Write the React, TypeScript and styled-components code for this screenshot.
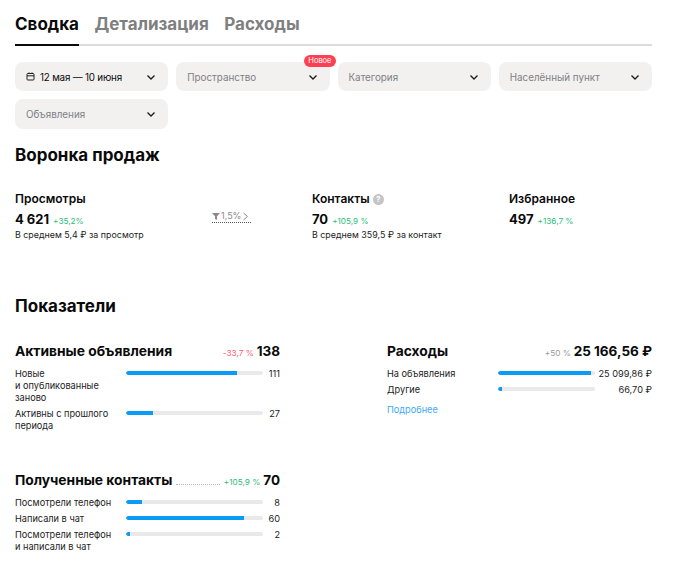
import React from 'react';
import styled, { createGlobalStyle } from 'styled-components';

const GlobalStyle = createGlobalStyle`
  html, body { margin: 0; padding: 0; background: #fff; }
  body { font-family: Inter, "Noto Sans", sans-serif; color: #0a0a0a; }
`;

const Page = styled.div`
  width: 637px;
  padding: 10px 30px 0 15px;
`;

const Tabs = styled.div`
  display: flex;
  gap: 15.5px;
  border-bottom: 2px solid #dcdcdc;
  height: 34px;
`;

const Tab = styled.div<{ $active?: boolean }>`
  font-size: 17px;
  line-height: 28px;
  height: 36px;
  box-sizing: border-box;
  font-weight: 700;
  color: ${p => (p.$active ? '#0a0a0a' : '#7f7f7f')};
  border-bottom: 2px solid ${p => (p.$active ? '#0a0a0a' : 'transparent')};
`;

const Filters = styled.div`
  display: grid;
  grid-template-columns: repeat(4, 1fr);
  gap: 8px;
  margin-top: 16px;
`;

const Filter = styled.div`
  position: relative;
  display: flex;
  align-items: center;
  height: 29px;
  padding: 0 11px 0 11px;
  background: #f2f1f0;
  border-radius: 8px;
  font-size: 9.85px;
  color: #7e8084;

  &:nth-child(5) { height: 30px; }
`;

const FilterValue = styled.span`
  display: flex;
  align-items: center;
  gap: 5px;
  color: #0a0a0a;
  letter-spacing: -0.2px;
`;

const Chevron = styled.svg`
  margin-left: auto;
  width: 12px;
  height: 12px;
  fill: none;
  stroke: #1a1a1a;
  stroke-width: 1.3;
`;

const NewBadge = styled.span`
  position: absolute;
  top: -7px;
  right: -6px;
  height: 12px;
  padding: 0 4px;
  border-radius: 6px;
  background: #ff4053;
  color: #fff;
  font-size: 7.5px;
  line-height: 12px;
`;

const SectionTitle = styled.h2`
  margin: 0;
  font-size: 17px;
  line-height: 22px;
  font-weight: 700;
`;

const FunnelTitle = styled(SectionTitle)`
  margin-top: 15px;
`;

const Funnel = styled.div`
  display: grid;
  grid-template-columns: 297px 197px 1fr;
  margin-top: 25px;
  height: 104px;
`;

const Metric = styled.div`
  position: relative;
`;

const MetricName = styled.div`
  display: flex;
  align-items: center;
  gap: 3px;
  font-size: 12px;
  line-height: 16px;
  font-weight: 600;
`;

const MetricLine = styled.div`
  display: flex;
  align-items: baseline;
  gap: 4px;
  margin-top: 3px;
  line-height: 18px;
`;

const MetricValue = styled.span`
  font-size: 13px;
  font-weight: 700;
`;

const Delta = styled.span<{ $tone: 'up' | 'down' | 'flat' }>`
  font-size: 8.2px;
  color: ${p => (p.$tone === 'up' ? '#2dbd7a' : p.$tone === 'down' ? '#ff5a6b' : '#9a9a9a')};
`;

const MetricNote = styled.div`
  font-size: 8.9px;
  line-height: 13px;
  margin-top: -2px;
  color: #1c1c1c;
`;

const Conversion = styled.div`
  position: absolute;
  top: 19px;
  left: 197px;
  width: 39px;
  display: flex;
  align-items: center;
  gap: 1px;
  font-size: 9px;
  line-height: 12px;
  color: #8a8a8a;
  border-bottom: 1px dotted #555;
`;

const Hint = styled.span`
  width: 11px;
  height: 11px;
  border-radius: 50%;
  background: #c4c4c4;
  color: #fff;
  font-size: 8px;
  line-height: 11px;
  font-weight: 700;
  text-align: center;
`;

const Columns = styled.div`
  display: grid;
  grid-template-columns: 265px 265px;
  column-gap: 107px;
  margin-top: 24px;
`;

const Column = styled.div`
  display: flex;
  flex-direction: column;
  gap: 34px;
`;

const StatHead = styled.div`
  display: flex;
  align-items: baseline;
  height: 20px;
  margin-bottom: 7px;
`;

const StatTitle = styled.div`
  font-size: 13.8px;
  font-weight: 700;
  line-height: 20px;
`;

const Leader = styled.span<{ $dotted?: boolean }>`
  flex: 1;
  margin: 0 4px;
  border-bottom: ${p => (p.$dotted ? '1px dotted #b5b5b5' : 'none')};
`;

const StatTotal = styled.span`
  font-size: 13.5px;
  font-weight: 700;
  margin-left: 3px;
`;

const Row = styled.div<{ $wide?: boolean }>`
  display: grid;
  grid-template-columns: ${p => (p.$wide ? '111px 97px 1fr' : '111px 137px 1fr')};
  margin-bottom: 4px;
  font-size: 9.2px;
  line-height: 12px;
  color: #1c1c1c;
`;

const RowLabel = styled.div`
  padding-right: 8px;
`;

const Track = styled.div`
  height: 4px;
  margin-top: 3px;
  border-radius: 2px;
  background: #e9e9e9;
  overflow: hidden;
`;

const Fill = styled.div`
  height: 100%;
  border-radius: 2px 0 0 2px;
  background: #0a9bf5;
`;

const RowValue = styled.div`
  text-align: right;
`;

const More = styled.a`
  display: block;
  margin-top: 8px;
  font-size: 9.2px;
  line-height: 12px;
  color: #3fa9f5;
`;

const DownIcon = () => (
  <Chevron viewBox="0 0 12 12"><path d="M2.5 4.5L6 8l3.5-3.5" /></Chevron>
);

const CalendarIcon = () => (
  <svg width="9" height="9" viewBox="0 0 9 9" fill="none" stroke="#222" strokeWidth="1">
    <rect x="1" y="1.5" width="7" height="6.5" rx="0.8" />
    <path d="M1 3.8h7M3 .4v1.6M6 .4v1.6" />
  </svg>
);

const FunnelIcon = () => (
  <svg width="8" height="8" viewBox="0 0 8 8" fill="#8a8a8a"><path d="M0 1h8L5 4.2V8L3 7V4.2z" /></svg>
);

const ArrowIcon = () => (
  <svg width="7" height="9" viewBox="0 0 7 9" fill="none" stroke="#8a8a8a" strokeWidth="1"><path d="M1.5 1l4 3.5-4 3.5" /></svg>
);

type BarRow = { label: React.ReactNode; pct: number; value: string };

const Bars = ({ rows, wide }: { rows: BarRow[]; wide?: boolean }) => (
  <>
    {rows.map((r, i) => (
      <Row key={i} $wide={wide}>
        <RowLabel>{r.label}</RowLabel>
        <Track><Fill style={{ width: `${r.pct}%` }} /></Track>
        <RowValue>{r.value}</RowValue>
      </Row>
    ))}
  </>
);

export default function App() {
  return (
    <Page>
      <GlobalStyle />
      <Tabs>
        <Tab $active>Сводка</Tab>
        <Tab>Детализация</Tab>
        <Tab>Расходы</Tab>
      </Tabs>

      <Filters>
        <Filter>
          <FilterValue><CalendarIcon />12 мая — 10 июня</FilterValue>
          <DownIcon />
        </Filter>
        <Filter>Пространство<DownIcon /><NewBadge>Новое</NewBadge></Filter>
        <Filter>Категория<DownIcon /></Filter>
        <Filter>Населённый пункт<DownIcon /></Filter>
        <Filter>Объявления<DownIcon /></Filter>
      </Filters>

      <FunnelTitle>Воронка продаж</FunnelTitle>
      <Funnel>
        <Metric>
          <MetricName>Просмотры</MetricName>
          <MetricLine><MetricValue>4 621</MetricValue><Delta $tone="up">+35,2%</Delta></MetricLine>
          <MetricNote>В среднем 5,4 ₽ за просмотр</MetricNote>
          <Conversion><FunnelIcon />1,5%<ArrowIcon /></Conversion>
        </Metric>
        <Metric>
          <MetricName>Контакты <Hint>?</Hint></MetricName>
          <MetricLine><MetricValue>70</MetricValue><Delta $tone="up">+105,9 %</Delta></MetricLine>
          <MetricNote>В среднем 359,5 ₽ за контакт</MetricNote>
        </Metric>
        <Metric>
          <MetricName>Избранное</MetricName>
          <MetricLine><MetricValue>497</MetricValue><Delta $tone="up">+136,7 %</Delta></MetricLine>
        </Metric>
      </Funnel>

      <SectionTitle>Показатели</SectionTitle>
      <Columns>
        <Column>
          <div>
            <StatHead>
              <StatTitle>Активные объявления</StatTitle>
              <Leader />
              <Delta $tone="down">-33,7 %</Delta>
              <StatTotal>138</StatTotal>
            </StatHead>
            <Bars rows={[
              { label: <>Новые<br />и опубликованные заново</>, pct: 81, value: '111' },
              { label: 'Активны с прошлого периода', pct: 20, value: '27' },
            ]} />
          </div>
          <div>
            <StatHead>
              <StatTitle>Полученные контакты</StatTitle>
              <Leader $dotted />
              <Delta $tone="up">+105,9 %</Delta>
              <StatTotal>70</StatTotal>
            </StatHead>
            <Bars rows={[
              { label: 'Посмотрели телефон', pct: 12, value: '8' },
              { label: 'Написали в чат', pct: 86, value: '60' },
              { label: 'Посмотрели телефон и написали в чат', pct: 3, value: '2' },
            ]} />
          </div>
        </Column>
        <Column>
          <div>
            <StatHead>
              <StatTitle>Расходы</StatTitle>
              <Leader />
              <Delta $tone="flat">+50 %</Delta>
              <StatTotal>25 166,56 ₽</StatTotal>
            </StatHead>
            <Bars wide rows={[
              { label: 'На объявления', pct: 96, value: '25 099,86 ₽' },
              { label: 'Другие', pct: 4, value: '66,70 ₽' },
            ]} />
            <More>Подробнее</More>
          </div>
        </Column>
      </Columns>
    </Page>
  );
}
